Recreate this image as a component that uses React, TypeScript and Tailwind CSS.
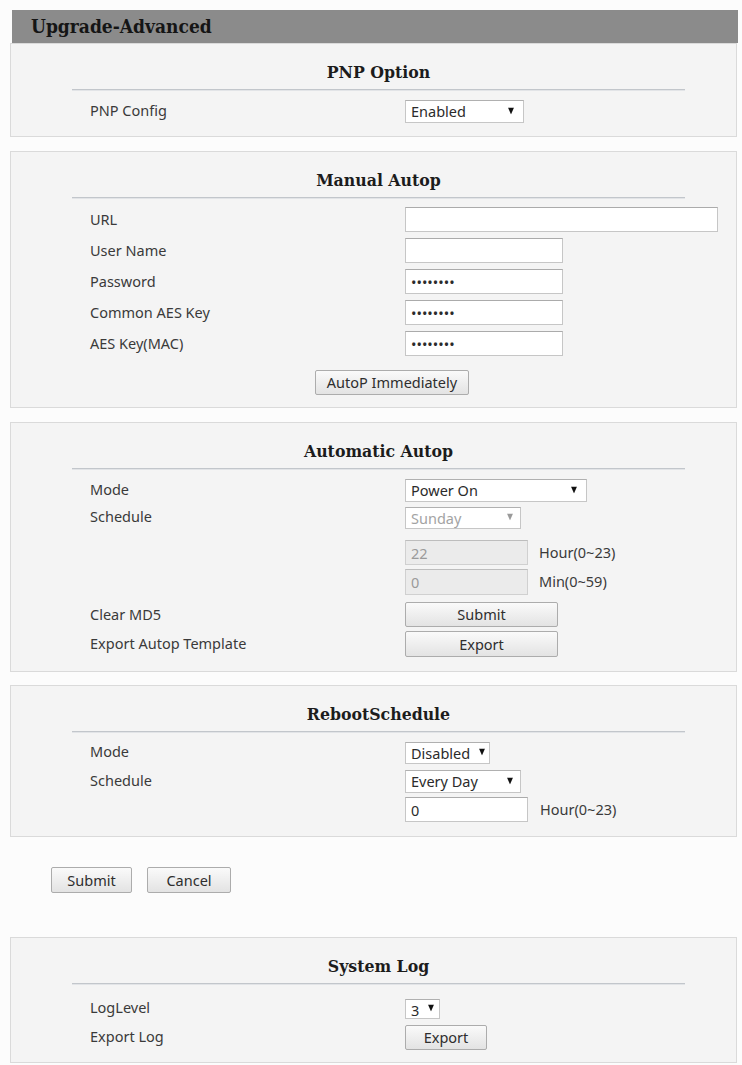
import React from "react";

// shared looks
const LABEL = "font-['Noto_Sans',sans-serif] text-[14.5px] text-[#3a3a3a]";
const CONTROL_TEXT = "font-['Noto_Sans',sans-serif] text-[14.5px] text-[#2b2b2b]";
const BUTTON =
    "border border-[#acacac] rounded-[2px] bg-gradient-to-b from-[#fafafa] to-[#e3e3e3] font-['Noto_Sans',sans-serif] text-[14.5px] text-[#2e2e2e] leading-none cursor-pointer";
const INPUT =
    "h-[25px] px-[5px] bg-white border border-[#c6c6c6] border-t-[#ababab] outline-none font-['Noto_Sans',sans-serif] text-[14.5px] text-[#2b2b2b]";
const INPUT_DISABLED =
    "h-[25px] px-[5px] bg-[#ebebeb] border border-[#d0d0d0] border-t-[#bdbdbd] outline-none font-['Noto_Sans',sans-serif] text-[14.5px] text-[#9a9a9a]";

const Arrow: React.FC<{ muted?: boolean }> = ({ muted }) => (
    <svg width="6" height="7" viewBox="0 0 6 7" className="block">
        <polygon points="0,0 6,0 3,7" fill={muted ? "#9a9a9a" : "#111111"} />
    </svg>
);

type SelectProps = {
    value: string;
    width: string;
    height: string;
    disabled?: boolean;
    arrowRight?: string;
};

const Select: React.FC<SelectProps> = ({ value, width, height, disabled, arrowRight = "right-[8px]" }) => (
    <div className={`relative ${width} ${height}`}>
        <select
            defaultValue={value}
            disabled={disabled}
            className={`appearance-none w-full h-full pl-[5px] pr-[16px] bg-white border border-[#c6c6c6] border-t-[#b0b0b0] outline-none ${
                disabled
                    ? "font-['Noto_Sans',sans-serif] text-[14.5px] text-[#a3a3a3]"
                    : CONTROL_TEXT
            }`}
        >
            <option value={value}>{value}</option>
        </select>
        <div className={`absolute ${arrowRight} top-1/2 -translate-y-1/2 pointer-events-none`}>
            <Arrow muted={disabled} />
        </div>
    </div>
);

const Section: React.FC<{ title: string; bottom: string; children: React.ReactNode }> = ({
    title,
    bottom,
    children,
}) => (
    <div className={`border border-[#dadada] bg-[#f4f4f4] ${bottom}`}>
        <div className="ml-[61px] w-[613px] pt-[18px]">
            <h2 className="h-[20px] leading-[20px] text-center font-['DejaVu_Serif_Condensed','DejaVu_Serif',serif] font-bold text-[17.5px] text-[#1c1c1c]">
                {title}
            </h2>
            <div className="mt-[7px] h-px bg-[#c2c6cb]" />
            <div className="h-px bg-[#e2e4e7]" />
        </div>
        <div className="pl-[79px]">{children}</div>
    </div>
);

const Row: React.FC<{ label?: string; className?: string; children: React.ReactNode }> = ({
    label,
    className = "",
    children,
}) => (
    <div className={`flex items-center ${className}`}>
        <span className={`w-[315px] shrink-0 ${LABEL}`}>{label}</span>
        <div className="flex items-center">{children}</div>
    </div>
);

export default function App() {
    return (
        <div className="min-h-screen bg-[#fcfcfc] pt-[10px] pl-[10px] w-[742px]">
            <div className="w-[727px]">
                {/* Title */}
                <div className="ml-[2px] w-[726px] h-[33px] bg-[#8b8b8b] flex items-center pl-[19px]">
                    <h1 className="font-['DejaVu_Serif_Condensed','DejaVu_Serif',serif] font-bold text-[19px] text-[#151515] leading-none">
                        Upgrade-Advanced
                    </h1>
                </div>

                {/* PNP Option */}
                <Section title="PNP Option" bottom="pb-[14px]">
                    <Row label="PNP Config" className="mt-[8px]">
                        <Select value="Enabled" width="w-[119px]" height="h-[23px]" arrowRight="right-[10px]" />
                    </Row>
                </Section>

                {/* Manual Autop */}
                <div className="mt-[14px]">
                    <Section title="Manual Autop" bottom="pb-[12px]">
                        <div className="mt-[8px] flex flex-col gap-[6px]">
                            <Row label="URL">
                                <input readOnly defaultValue="" className={`${INPUT} w-[313px]`} />
                            </Row>
                            <Row label="User Name">
                                <input readOnly defaultValue="" className={`${INPUT} w-[158px]`} />
                            </Row>
                            <Row label="Password">
                                <input type="password" readOnly defaultValue="********" className={`${INPUT} w-[158px]`} />
                            </Row>
                            <Row label="Common AES Key">
                                <input type="password" readOnly defaultValue="********" className={`${INPUT} w-[158px]`} />
                            </Row>
                            <Row label="AES Key(MAC)">
                                <input type="password" readOnly defaultValue="********" className={`${INPUT} w-[158px]`} />
                            </Row>
                        </div>
                        <div className="mt-[14px] ml-[225px]">
                            <button className={`${BUTTON} w-[154px] h-[25px]`}>AutoP Immediately</button>
                        </div>
                    </Section>
                </div>

                {/* Automatic Autop */}
                <div className="mt-[14px]">
                    <Section title="Automatic Autop" bottom="pb-[14px]">
                        <Row label="Mode" className="mt-[8px]">
                            <Select value="Power On" width="w-[182px]" height="h-[23px]" arrowRight="right-[10px]" />
                        </Row>
                        <Row label="Schedule" className="mt-[5px]">
                            <Select value="Sunday" width="w-[116px]" height="h-[22px]" disabled arrowRight="right-[8px]" />
                        </Row>
                        <Row className="mt-[12px]">
                            <input disabled defaultValue="22" className={`${INPUT_DISABLED} w-[123px]`} />
                            <span className={`ml-[11px] ${LABEL}`}>Hour(0~23)</span>
                        </Row>
                        <Row className="mt-[4px]">
                            <input disabled defaultValue="0" className={`${INPUT_DISABLED} w-[123px] h-[26px]`} />
                            <span className={`ml-[11px] ${LABEL}`}>Min(0~59)</span>
                        </Row>
                        <Row label="Clear MD5" className="mt-[7px]">
                            <button className={`${BUTTON} w-[153px] h-[25px]`}>Submit</button>
                        </Row>
                        <Row label="Export Autop Template" className="mt-[4px]">
                            <button className={`${BUTTON} w-[153px] h-[26px]`}>Export</button>
                        </Row>
                    </Section>
                </div>

                {/* RebootSchedule */}
                <div className="mt-[13px]">
                    <Section title="RebootSchedule" bottom="pb-[14px]">
                        <Row label="Mode" className="mt-[8px]">
                            <Select value="Disabled" width="w-[85px]" height="h-[22px]" arrowRight="right-[5px]" />
                        </Row>
                        <Row label="Schedule" className="mt-[6px]">
                            <Select value="Every Day" width="w-[116px]" height="h-[23px]" arrowRight="right-[8px]" />
                        </Row>
                        <Row className="mt-[5px]">
                            <input readOnly defaultValue="0" className={`${INPUT} w-[123px]`} />
                            <span className={`ml-[12px] ${LABEL}`}>Hour(0~23)</span>
                        </Row>
                    </Section>
                </div>

                {/* Submit / Cancel */}
                <div className="mt-[30px] ml-[41px] flex gap-[15px]">
                    <button className={`${BUTTON} w-[81px] h-[26px]`}>Submit</button>
                    <button className={`${BUTTON} w-[84px] h-[26px]`}>Cancel</button>
                </div>

                {/* System Log */}
                <div className="mt-[44px]">
                    <Section title="System Log" bottom="pb-[12px]">
                        <Row label="LogLevel" className="mt-[12px]">
                            <Select value="3" width="w-[35px]" height="h-[20px]" arrowRight="right-[6px]" />
                        </Row>
                        <Row label="Export Log" className="mt-[6px]">
                            <button className={`${BUTTON} w-[82px] h-[25px]`}>Export</button>
                        </Row>
                    </Section>
                </div>
            </div>
        </div>
    );
}
